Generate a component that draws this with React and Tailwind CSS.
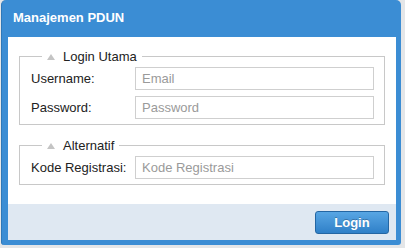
export default function App() {
  const font = { fontFamily: '"Liberation Sans", Arial, sans-serif' };
  const Tri = () => (
    <svg width="8" height="6" viewBox="0 0 8 6" className="mr-[8px]">
      <polygon points="4,0 8,6 0,6" fill="#c4c4c4" />
    </svg>
  );
  return (
    <div className="w-[405px] h-[248px] bg-[#e4e6e8] pt-0" style={font}>
      <div className="ml-[1px] w-[400px] h-[245px] bg-[#3b8dd4] rounded-t-[5px] rounded-b-[3px] flex flex-col pl-[6px] pr-[5px] pb-[5px] border-l border-[#2f78b8]">
        <div className="h-[37px] flex items-center pl-[5px] text-white font-bold text-[13px] pb-[1px]">
          Manajemen PDUN
        </div>
        <div className="flex-1 bg-white px-[11px] pt-[12px]">
          <fieldset className="border border-[#c8c8c8] pl-[11px] pr-[10px] pb-[5px]">
            <legend className="ml-[11px] px-[5px] flex items-center text-[13px] leading-[15px] text-[#222]">
              <Tri />
              Login Utama
            </legend>
            <div className="flex flex-col gap-[6px] pt-[3px]">
              <div className="flex items-center">
                <span className="w-[104px] text-[13px] text-[#222]">Username:</span>
                <div className="flex-1 h-[23px] border border-[#cfcfcf] flex items-center pl-[6px] text-[13px] text-[#9a9a9a]">Email</div>
              </div>
              <div className="flex items-center">
                <span className="w-[104px] text-[13px] text-[#222]">Password:</span>
                <div className="flex-1 h-[23px] border border-[#cfcfcf] flex items-center pl-[6px] text-[13px] text-[#9a9a9a]">Password</div>
              </div>
            </div>
          </fieldset>
          <fieldset className="mt-[13px] border border-[#c8c8c8] pl-[11px] pr-[10px] pb-[5px]">
            <legend className="ml-[11px] px-[5px] flex items-center text-[13px] leading-[15px] text-[#222]">
              <Tri />
              Alternatif
            </legend>
            <div className="flex items-center pt-[3px]">
              <span className="w-[104px] text-[13px] text-[#222]">Kode Registrasi:</span>
              <div className="flex-1 h-[23px] border border-[#cfcfcf] flex items-center pl-[6px] text-[13px] text-[#9a9a9a]">Kode Registrasi</div>
            </div>
          </fieldset>
        </div>
        <div className="h-[36px] bg-[#dfe8f2] flex items-center justify-end pr-[7px] pt-[1px]">
          <button className="w-[74px] h-[23px] rounded-[3px] border border-[#2466a3] bg-gradient-to-b from-[#58a6e4] to-[#2f80c8] text-white font-bold text-[13px] [text-shadow:0_-1px_0_rgba(0,0,0,0.25)]">
            Login
          </button>
        </div>
      </div>
    </div>
  );
}
